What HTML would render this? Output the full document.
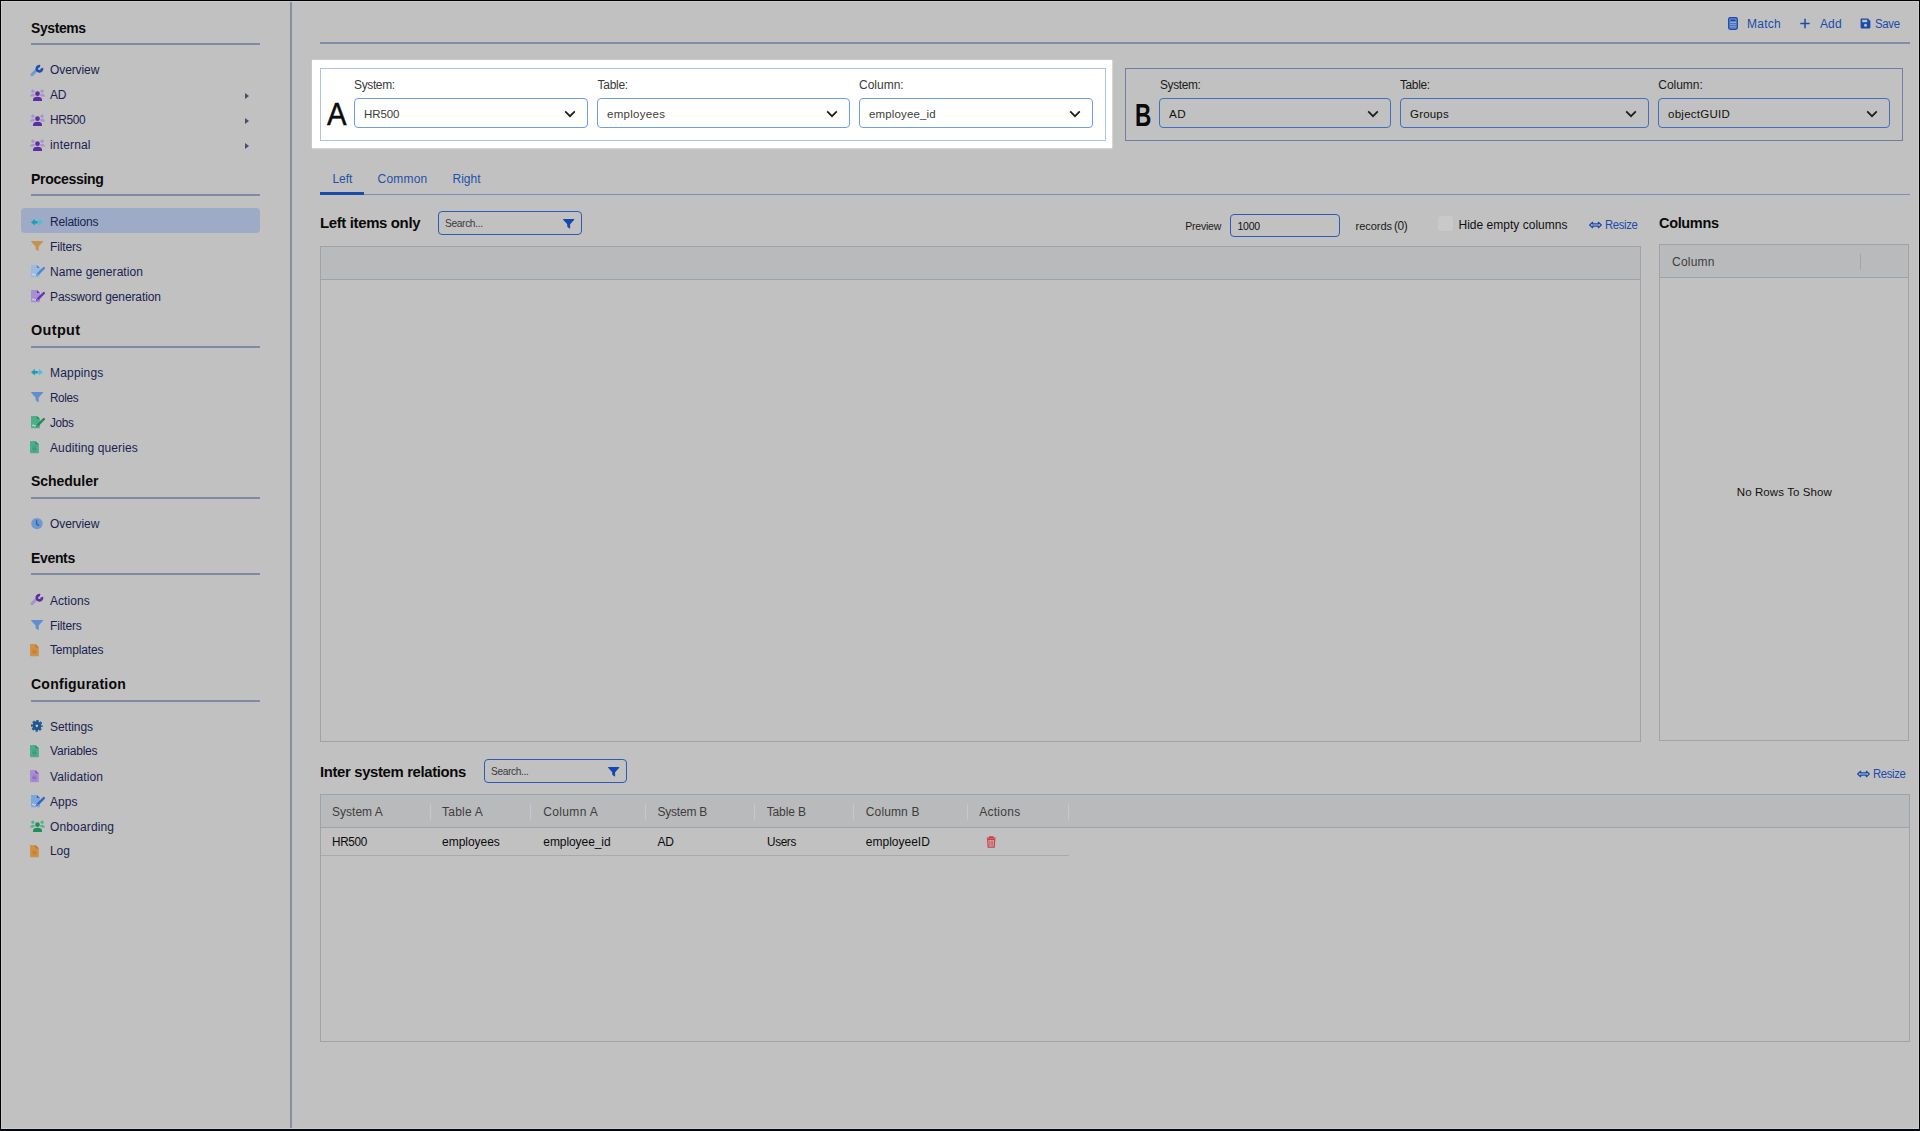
<!DOCTYPE html>
<html><head><meta charset="utf-8"><title>Relations</title>
<style>
*{box-sizing:border-box;margin:0;padding:0}
html,body{width:1920px;height:1131px;overflow:hidden;background:#c1c1c1;font-family:"Liberation Sans",sans-serif;color:#111}
.abs{position:absolute}
#frame{position:absolute;left:0;top:0;width:1920px;height:1131px;border:1px solid #000;border-bottom:2px solid #04070e;z-index:50;pointer-events:none}
#frame:after{content:"";position:absolute;left:0;top:0;right:0;bottom:0;border:1px solid #cccccc}
#side{position:absolute;left:0;top:0;width:292px;height:1131px;border-right:2px solid #888fa6}
.h{position:absolute;left:31px;font-weight:bold;font-size:14.5px;letter-spacing:-0.2px;color:#0a0a0a;white-space:nowrap;line-height:20px}
.hl{position:absolute;left:31px;width:229px;height:2px;background:#7f8aa5}
.it{position:absolute;left:50px;font-size:12px;color:#1a2150;white-space:nowrap;line-height:16px}
.ic{position:absolute;line-height:0}
.car{position:absolute;left:245px;width:0;height:0;border-left:4px solid #4a4e6a;border-top:3.5px solid transparent;border-bottom:3.5px solid transparent}
#sel{position:absolute;left:21px;top:208px;width:239px;height:25px;background:#9dabc6;border-radius:4px}
.ln{position:absolute;height:1px;background:#8e98ae}
.lbl{position:absolute;font-size:12px;color:#1a1a1a;white-space:nowrap;line-height:14px}
.la{color:#3a3a3a}
.dd{position:absolute;height:30px;border:1px solid #3f70c2;border-radius:4px;font-size:12px;color:#111;line-height:28px;padding-left:9px;white-space:nowrap}
.da{border-color:#6a9fee;color:#3c3c3c}
.dd svg{position:absolute;right:11px;top:11px}
.big{position:absolute;font-size:29.5px;color:#0a0a0a;line-height:34px}
.tab{position:absolute;top:171px;font-size:12px;color:#2550a8;line-height:16px;white-space:nowrap}
.ttl{position:absolute;font-weight:bold;font-size:14.5px;letter-spacing:-0.2px;color:#0a0a0a;line-height:18px;white-space:nowrap}
.srch{position:absolute;height:24px;border:1px solid #2a5db8;border-radius:4px;font-size:10.5px;color:#3a3a3a;line-height:22px;padding-left:6px}
.lnk{position:absolute;font-size:12px;color:#1e52b4;white-space:nowrap;line-height:14px}
.grid{position:absolute;border:1px solid #9fa2a7;background:#c1c1c1}
.gh{position:absolute;left:0;top:0;right:0;background:#b9babc;border-bottom:1px solid #9fa2a7}
.th{position:absolute;font-size:12px;color:#3d3d3d;white-space:nowrap;line-height:14px}
.td{position:absolute;font-size:12px;color:#0c0c0c;white-space:nowrap;line-height:14px}
.sep{position:absolute;width:1px}

.t{position:absolute;white-space:nowrap}

</style></head><body>
<div id="side">
<div id="sel"></div>
<div class="t" style="left:31px;top:17.75px;font-size:14px;line-height:20px;color:#0a0a0a;font-weight:bold;letter-spacing:-0.350px;transform:scaleX(0.9929);transform-origin:0 0;">Systems</div>
<div class="hl" style="top:43px"></div>
<div class="t" style="left:31px;top:168.75px;font-size:14px;line-height:20px;color:#0a0a0a;font-weight:bold;letter-spacing:-0.287px;">Processing</div>
<div class="hl" style="top:194px"></div>
<div class="t" style="left:31px;top:320.45px;font-size:14px;line-height:20px;color:#0a0a0a;font-weight:bold;letter-spacing:0.350px;transform:scaleX(1.0289);transform-origin:0 0;">Output</div>
<div class="hl" style="top:346px"></div>
<div class="t" style="left:31px;top:471.05px;font-size:14px;line-height:20px;color:#0a0a0a;font-weight:bold;letter-spacing:-0.038px;">Scheduler</div>
<div class="hl" style="top:497px"></div>
<div class="t" style="left:31px;top:548.05px;font-size:14px;line-height:20px;color:#0a0a0a;font-weight:bold;letter-spacing:-0.344px;">Events</div>
<div class="hl" style="top:573px"></div>
<div class="t" style="left:31px;top:673.65px;font-size:14px;line-height:20px;color:#0a0a0a;font-weight:bold;letter-spacing:0.253px;">Configuration</div>
<div class="hl" style="top:700px"></div>
<div class="ic" style="left:29.7px;top:64.7px"><svg viewBox="0 0 13.3 11.5" width="13.3" height="11.5" style="display:block;overflow:visible"><path d="M1.9 9.7L6.6 5" stroke="#6c9ad0" stroke-width="3" stroke-linecap="round" fill="none"/><path d="M11.91 3.13A2.6 2.6 0 1 1 10.07 1.29" stroke="#1f4fb2" stroke-width="2.7" fill="none"/></svg></div>
<div class="t" style="left:50px;top:59.84px;font-size:12px;line-height:20px;color:#1a2150;letter-spacing:-0.102px;">Overview</div>
<div class="ic" style="left:30.3px;top:89.0px"><svg viewBox="0 0 15 12" width="15" height="12" style="display:block;overflow:visible"><circle cx="2.9" cy="2.2" r="1.65" fill="#a794cc"/><circle cx="12.1" cy="2.2" r="1.65" fill="#a794cc"/><path d="M0 7.6a2.9 2.7 0 0 1 5.2-1.7L3.6 7.6z" fill="#a794cc"/><path d="M15 7.6a2.9 2.7 0 0 0-5.2-1.7L11.4 7.6z" fill="#a794cc"/><circle cx="7.5" cy="4.7" r="2.35" fill="#5b2ea3"/><path d="M3 12v-1a4.5 3.3 0 0 1 9 0v1z" fill="#5b2ea3"/></svg></div>
<div class="t" style="left:50px;top:84.84px;font-size:12px;line-height:20px;color:#1a2150;letter-spacing:-0.172px;">AD</div>
<div class="car" style="top:93px"></div>
<div class="ic" style="left:30.3px;top:113.8px"><svg viewBox="0 0 15 12" width="15" height="12" style="display:block;overflow:visible"><circle cx="2.9" cy="2.2" r="1.65" fill="#a794cc"/><circle cx="12.1" cy="2.2" r="1.65" fill="#a794cc"/><path d="M0 7.6a2.9 2.7 0 0 1 5.2-1.7L3.6 7.6z" fill="#a794cc"/><path d="M15 7.6a2.9 2.7 0 0 0-5.2-1.7L11.4 7.6z" fill="#a794cc"/><circle cx="7.5" cy="4.7" r="2.35" fill="#5b2ea3"/><path d="M3 12v-1a4.5 3.3 0 0 1 9 0v1z" fill="#5b2ea3"/></svg></div>
<div class="t" style="left:50px;top:109.84px;font-size:12px;line-height:20px;color:#1a2150;letter-spacing:-0.350px;transform:scaleX(0.9928);transform-origin:0 0;">HR500</div>
<div class="car" style="top:118px"></div>
<div class="ic" style="left:30.3px;top:138.7px"><svg viewBox="0 0 15 12" width="15" height="12" style="display:block;overflow:visible"><circle cx="2.9" cy="2.2" r="1.65" fill="#a794cc"/><circle cx="12.1" cy="2.2" r="1.65" fill="#a794cc"/><path d="M0 7.6a2.9 2.7 0 0 1 5.2-1.7L3.6 7.6z" fill="#a794cc"/><path d="M15 7.6a2.9 2.7 0 0 0-5.2-1.7L11.4 7.6z" fill="#a794cc"/><circle cx="7.5" cy="4.7" r="2.35" fill="#5b2ea3"/><path d="M3 12v-1a4.5 3.3 0 0 1 9 0v1z" fill="#5b2ea3"/></svg></div>
<div class="t" style="left:50px;top:134.84px;font-size:12px;line-height:20px;color:#1a2150;letter-spacing:0.163px;">internal</div>
<div class="car" style="top:143px"></div>
<div class="ic" style="left:30.7px;top:218.5px"><svg viewBox="0 0 11.9 6.4" width="11.9" height="6.4" style="display:block;overflow:visible"><path d="M11.9 3.2L8 0V2H5.6V4.4H8V6.4z" fill="#4fc0d4"/><path d="M0 3.2L3.9 0V2H6.6V4.4H3.9V6.4z" fill="#1b9db5"/></svg></div>
<div class="t" style="left:50px;top:211.84px;font-size:12px;line-height:20px;color:#1a2150;letter-spacing:-0.204px;">Relations</div>
<div class="ic" style="left:30.6px;top:241.3px"><svg viewBox="0 0 12.2 10.1" width="12.2" height="10.1" style="display:block;overflow:visible"><path d="M.5 0H11.7a.45.45 0 0 1 .33.76L7.7 5.4V9.6a.4.4 0 0 1-.64.33L4.95 8.4a.85.85 0 0 1-.35-.68V5.4L.17.76A.45.45 0 0 1 .5 0z" fill="#c9924b"/></svg></div>
<div class="t" style="left:50px;top:236.84px;font-size:12px;line-height:20px;color:#1a2150;letter-spacing:-0.145px;">Filters</div>
<div class="ic" style="left:30.8px;top:265.0px"><svg viewBox="0 0 13.5 12.2" width="13.5" height="12.2" style="display:block;overflow:visible"><path d="M.6 0H5.9L8.9 3V12.2H.6a.6.6 0 0 1-.6-.6V.6A.6.6 0 0 1 .6 0z" fill="#9db9dd"/><path d="M5.9 0L8.9 3H5.9z" fill="#4f86d4"/><path d="M1.4 10.2q.9-2.6 1.6-.6t1.5-.3" stroke="#e6e9f2" stroke-width=".95" fill="none"/><path d="M6.6 9.3L11.7 4.2" stroke="#4f86d4" stroke-width="2.5" fill="none"/><path d="M12.3 3.6L12.8 3.1" stroke="#4f86d4" stroke-width="2.5" fill="none" stroke-linecap="round"/><path d="M4.9 11l.55-2.1 1.55 1.55z" fill="#4f86d4"/></svg></div>
<div class="t" style="left:50px;top:261.84px;font-size:12px;line-height:20px;color:#1a2150;letter-spacing:0.060px;">Name generation</div>
<div class="ic" style="left:30.8px;top:289.8px"><svg viewBox="0 0 13.5 12.2" width="13.5" height="12.2" style="display:block;overflow:visible"><path d="M.6 0H5.9L8.9 3V12.2H.6a.6.6 0 0 1-.6-.6V.6A.6.6 0 0 1 .6 0z" fill="#a98fd0"/><path d="M5.9 0L8.9 3H5.9z" fill="#6a35b0"/><path d="M1.4 10.2q.9-2.6 1.6-.6t1.5-.3" stroke="#e6e9f2" stroke-width=".95" fill="none"/><path d="M6.6 9.3L11.7 4.2" stroke="#6a35b0" stroke-width="2.5" fill="none"/><path d="M12.3 3.6L12.8 3.1" stroke="#6a35b0" stroke-width="2.5" fill="none" stroke-linecap="round"/><path d="M4.9 11l.55-2.1 1.55 1.55z" fill="#6a35b0"/></svg></div>
<div class="t" style="left:50px;top:286.84px;font-size:12px;line-height:20px;color:#1a2150;letter-spacing:-0.096px;">Password generation</div>
<div class="ic" style="left:30.7px;top:368.9px"><svg viewBox="0 0 11.9 6.4" width="11.9" height="6.4" style="display:block;overflow:visible"><path d="M11.9 3.2L8 0V2H5.6V4.4H8V6.4z" fill="#4fc0d4"/><path d="M0 3.2L3.9 0V2H6.6V4.4H3.9V6.4z" fill="#1b9db5"/></svg></div>
<div class="t" style="left:50px;top:362.84px;font-size:12px;line-height:20px;color:#1a2150;letter-spacing:0.181px;">Mappings</div>
<div class="ic" style="left:30.6px;top:392.4px"><svg viewBox="0 0 12.2 10.1" width="12.2" height="10.1" style="display:block;overflow:visible"><path d="M.5 0H11.7a.45.45 0 0 1 .33.76L7.7 5.4V9.6a.4.4 0 0 1-.64.33L4.95 8.4a.85.85 0 0 1-.35-.68V5.4L.17.76A.45.45 0 0 1 .5 0z" fill="#5f8fd0"/></svg></div>
<div class="t" style="left:50px;top:387.84px;font-size:12px;line-height:20px;color:#1a2150;letter-spacing:-0.350px;transform:scaleX(0.9765);transform-origin:0 0;">Roles</div>
<div class="ic" style="left:30.8px;top:416.2px"><svg viewBox="0 0 13.5 12.2" width="13.5" height="12.2" style="display:block;overflow:visible"><path d="M.6 0H5.9L8.9 3V12.2H.6a.6.6 0 0 1-.6-.6V.6A.6.6 0 0 1 .6 0z" fill="#4fae8a"/><path d="M5.9 0L8.9 3H5.9z" fill="#23895f"/><path d="M1.4 10.2q.9-2.6 1.6-.6t1.5-.3" stroke="#e6e9f2" stroke-width=".95" fill="none"/><path d="M6.6 9.3L11.7 4.2" stroke="#23895f" stroke-width="2.5" fill="none"/><path d="M12.3 3.6L12.8 3.1" stroke="#23895f" stroke-width="2.5" fill="none" stroke-linecap="round"/><path d="M4.9 11l.55-2.1 1.55 1.55z" fill="#23895f"/></svg></div>
<div class="t" style="left:50px;top:412.84px;font-size:12px;line-height:20px;color:#1a2150;letter-spacing:-0.350px;transform:scaleX(0.9790);transform-origin:0 0;">Jobs</div>
<div class="ic" style="left:30.4px;top:441.1px"><svg viewBox="0 0 8.9 12.2" width="8.9" height="12.2" style="display:block;overflow:visible"><path d="M.9 0H5.4L8.9 3.5V11.3a.9.9 0 0 1-.9.9H.9a.9.9 0 0 1-.9-.9V.9A.9.9 0 0 1 .9 0z" fill="#4fae8a"/><path d="M5.4 0L8.9 3.5H6a.6.6 0 0 1-.6-.6z" fill="#2b8f6a"/><rect x="2.3" y="6.4" width="4.3" height="2.7" fill="#2b8f6a" opacity=".6"/><path d="M2.3 5.3H6.6M2.3 10.3H6.6" stroke="#2b8f6a" stroke-width=".8" opacity=".35"/></svg></div>
<div class="t" style="left:50px;top:437.84px;font-size:12px;line-height:20px;color:#1a2150;letter-spacing:0.116px;">Auditing queries</div>
<div class="ic" style="left:30.6px;top:517.8px"><svg viewBox="0 0 11.9 11.2" width="11.9" height="11.2" style="display:block;overflow:visible"><circle cx="5.95" cy="5.6" r="5.7" fill="#6c9ad0"/><path d="M5.6 2.6V6L7.7 7.4" stroke="#2a5bb5" stroke-width="1.3" fill="none" stroke-linecap="round"/></svg></div>
<div class="t" style="left:50px;top:513.84px;font-size:12px;line-height:20px;color:#1a2150;letter-spacing:-0.102px;">Overview</div>
<div class="ic" style="left:29.7px;top:593.6px"><svg viewBox="0 0 13.3 11.5" width="13.3" height="11.5" style="display:block;overflow:visible"><path d="M1.9 9.7L6.6 5" stroke="#a794cc" stroke-width="3" stroke-linecap="round" fill="none"/><path d="M11.91 3.13A2.6 2.6 0 1 1 10.07 1.29" stroke="#5b2ea3" stroke-width="2.7" fill="none"/></svg></div>
<div class="t" style="left:50px;top:590.84px;font-size:12px;line-height:20px;color:#1a2150;letter-spacing:0.057px;">Actions</div>
<div class="ic" style="left:30.6px;top:620.2px"><svg viewBox="0 0 12.2 10.1" width="12.2" height="10.1" style="display:block;overflow:visible"><path d="M.5 0H11.7a.45.45 0 0 1 .33.76L7.7 5.4V9.6a.4.4 0 0 1-.64.33L4.95 8.4a.85.85 0 0 1-.35-.68V5.4L.17.76A.45.45 0 0 1 .5 0z" fill="#5f8fd0"/></svg></div>
<div class="t" style="left:50px;top:615.84px;font-size:12px;line-height:20px;color:#1a2150;letter-spacing:-0.145px;">Filters</div>
<div class="ic" style="left:30.4px;top:644.2px"><svg viewBox="0 0 8.9 12.2" width="8.9" height="12.2" style="display:block;overflow:visible"><path d="M.9 0H5.4L8.9 3.5V11.3a.9.9 0 0 1-.9.9H.9a.9.9 0 0 1-.9-.9V.9A.9.9 0 0 1 .9 0z" fill="#cf9248"/><path d="M5.4 0L8.9 3.5H6a.6.6 0 0 1-.6-.6z" fill="#b9772a"/><rect x="2.3" y="6.4" width="4.3" height="2.7" fill="#b9772a" opacity=".6"/><path d="M2.3 5.3H6.6M2.3 10.3H6.6" stroke="#b9772a" stroke-width=".8" opacity=".35"/></svg></div>
<div class="t" style="left:50px;top:639.84px;font-size:12px;line-height:20px;color:#1a2150;letter-spacing:-0.150px;">Templates</div>
<div class="ic" style="left:30.5px;top:720.2px"><svg viewBox="0 0 11.7 11.7" width="11.7" height="11.7" style="display:block;overflow:visible"><circle cx="5.85" cy="5.85" r="2.9" stroke="#1d5590" stroke-width="3.2" fill="none"/><circle cx="5.85" cy="5.85" r="5.05" stroke="#1d5590" stroke-width="1.7" fill="none" stroke-dasharray="2.25 1.716" stroke-dashoffset="1.125"/></svg></div>
<div class="t" style="left:50px;top:716.84px;font-size:12px;line-height:20px;color:#1a2150;letter-spacing:-0.037px;">Settings</div>
<div class="ic" style="left:30.4px;top:744.9px"><svg viewBox="0 0 8.9 12.2" width="8.9" height="12.2" style="display:block;overflow:visible"><path d="M.9 0H5.4L8.9 3.5V11.3a.9.9 0 0 1-.9.9H.9a.9.9 0 0 1-.9-.9V.9A.9.9 0 0 1 .9 0z" fill="#4fae8a"/><path d="M5.4 0L8.9 3.5H6a.6.6 0 0 1-.6-.6z" fill="#2b8f6a"/><rect x="2.3" y="6.4" width="4.3" height="2.7" fill="#2b8f6a" opacity=".6"/><path d="M2.3 5.3H6.6M2.3 10.3H6.6" stroke="#2b8f6a" stroke-width=".8" opacity=".35"/></svg></div>
<div class="t" style="left:50px;top:740.84px;font-size:12px;line-height:20px;color:#1a2150;letter-spacing:-0.193px;">Variables</div>
<div class="ic" style="left:30.4px;top:770.3px"><svg viewBox="0 0 8.9 12.2" width="8.9" height="12.2" style="display:block;overflow:visible"><path d="M.9 0H5.4L8.9 3.5V11.3a.9.9 0 0 1-.9.9H.9a.9.9 0 0 1-.9-.9V.9A.9.9 0 0 1 .9 0z" fill="#a98fd0"/><path d="M5.4 0L8.9 3.5H6a.6.6 0 0 1-.6-.6z" fill="#7d55b8"/><rect x="2.3" y="6.4" width="4.3" height="2.7" fill="#7d55b8" opacity=".6"/><path d="M2.3 5.3H6.6M2.3 10.3H6.6" stroke="#7d55b8" stroke-width=".8" opacity=".35"/></svg></div>
<div class="t" style="left:50px;top:766.84px;font-size:12px;line-height:20px;color:#1a2150;letter-spacing:0.130px;">Validation</div>
<div class="ic" style="left:30.8px;top:795.4px"><svg viewBox="0 0 13.5 12.2" width="13.5" height="12.2" style="display:block;overflow:visible"><path d="M.6 0H5.9L8.9 3V12.2H.6a.6.6 0 0 1-.6-.6V.6A.6.6 0 0 1 .6 0z" fill="#7fa6dc"/><path d="M5.9 0L8.9 3H5.9z" fill="#2f67c4"/><path d="M1.4 10.2q.9-2.6 1.6-.6t1.5-.3" stroke="#e6e9f2" stroke-width=".95" fill="none"/><path d="M6.6 9.3L11.7 4.2" stroke="#2f67c4" stroke-width="2.5" fill="none"/><path d="M12.3 3.6L12.8 3.1" stroke="#2f67c4" stroke-width="2.5" fill="none" stroke-linecap="round"/><path d="M4.9 11l.55-2.1 1.55 1.55z" fill="#2f67c4"/></svg></div>
<div class="t" style="left:50px;top:791.84px;font-size:12px;line-height:20px;color:#1a2150;letter-spacing:0.047px;">Apps</div>
<div class="ic" style="left:30.3px;top:820.1px"><svg viewBox="0 0 15 12" width="15" height="12" style="display:block;overflow:visible"><circle cx="2.9" cy="2.2" r="1.65" fill="#56b388"/><circle cx="12.1" cy="2.2" r="1.65" fill="#56b388"/><path d="M0 7.6a2.9 2.7 0 0 1 5.2-1.7L3.6 7.6z" fill="#56b388"/><path d="M15 7.6a2.9 2.7 0 0 0-5.2-1.7L11.4 7.6z" fill="#56b388"/><circle cx="7.5" cy="4.7" r="2.35" fill="#1e8f5c"/><path d="M3 12v-1a4.5 3.3 0 0 1 9 0v1z" fill="#1e8f5c"/></svg></div>
<div class="t" style="left:50px;top:816.84px;font-size:12px;line-height:20px;color:#1a2150;letter-spacing:0.142px;">Onboarding</div>
<div class="ic" style="left:30.4px;top:844.8px"><svg viewBox="0 0 8.9 12.2" width="8.9" height="12.2" style="display:block;overflow:visible"><path d="M.9 0H5.4L8.9 3.5V11.3a.9.9 0 0 1-.9.9H.9a.9.9 0 0 1-.9-.9V.9A.9.9 0 0 1 .9 0z" fill="#cf9248"/><path d="M5.4 0L8.9 3.5H6a.6.6 0 0 1-.6-.6z" fill="#b9772a"/><rect x="2.3" y="6.4" width="4.3" height="2.7" fill="#b9772a" opacity=".6"/><path d="M2.3 5.3H6.6M2.3 10.3H6.6" stroke="#b9772a" stroke-width=".8" opacity=".35"/></svg></div>
<div class="t" style="left:50px;top:840.84px;font-size:12px;line-height:20px;color:#1a2150;letter-spacing:-0.066px;">Log</div>
</div>
<div id="main">
<div class="abs" style="left:1728px;top:17px;line-height:0"><svg viewBox="0 0 10 13" width="10" height="13"><rect x="0.8" y="0.8" width="8.4" height="11.4" rx="1.4" fill="#8fa7d6" stroke="#1a4bab" stroke-width="1.5"/><rect x="2.3" y="2.4" width="5.4" height="2" fill="#1a4bab"/><path d="M2.4 6.6h5.2M2.4 8.4h5.2M2.4 10.2h5.2" stroke="#1a4bab" stroke-width="1" stroke-dasharray="1.2 0.8"/></svg></div>
<div class="t" style="left:1747px;top:13.64px;font-size:12px;line-height:20px;color:#1a4bab;letter-spacing:0.228px;">Match</div>
<div class="abs" style="left:1800px;top:18px;line-height:0"><svg viewBox="0 0 10 11" width="10" height="11"><path d="M5 0.8V10.2M0.3 5.5H9.7" stroke="#1a4bab" stroke-width="1.5"/></svg></div>
<div class="t" style="left:1820px;top:13.64px;font-size:12px;line-height:20px;color:#1a4bab;letter-spacing:0.120px;">Add</div>
<div class="abs" style="left:1860px;top:18px;line-height:0"><svg viewBox="0 0 11 11" width="11" height="11"><path d="M1.4 0.6H8L10.4 3V9.6a.8.8 0 0 1-.8.8H1.4a.8.8 0 0 1-.8-.8V1.4a.8.8 0 0 1 .8-.8z" fill="#1a4bab"/><rect x="2.2" y="1.8" width="5" height="2.4" fill="#c1c1c1"/><circle cx="5.5" cy="7.2" r="1.5" fill="#c1c1c1"/></svg></div>
<div class="t" style="left:1875px;top:13.64px;font-size:12px;line-height:20px;color:#1a4bab;letter-spacing:-0.350px;transform:scaleX(0.9502);transform-origin:0 0;">Save</div>
<div class="ln" style="left:320px;top:42px;width:1590px;height:2px;background:#828ca9"></div>
<div class="abs" style="left:312px;top:60px;width:800px;height:88px;background:#fff;box-shadow:0 0 1.5px 0.5px #fff"></div>
<div class="abs" style="left:320px;top:68px;width:786px;height:73px;border:1px solid #b4c0e0"></div>
<div class="big" style="left:327px;top:97px;font-size:31.5px;-webkit-text-stroke:0.45px #0a0a0a;transform:scaleX(.93);transform-origin:0 0">A</div>
<div class="t" style="left:354px;top:74.54px;font-size:12px;line-height:20px;color:#3a3a3a;letter-spacing:-0.350px;transform:scaleX(0.9965);transform-origin:0 0;">System:</div>
<div class="t" style="left:597.5px;top:74.54px;font-size:12px;line-height:20px;color:#3a3a3a;letter-spacing:-0.266px;">Table:</div>
<div class="t" style="left:859px;top:74.54px;font-size:12px;line-height:20px;color:#3a3a3a;letter-spacing:0.002px;">Column:</div>
<div class="dd" style="left:354px;top:98px;width:234px;border-color:#6a9fee"><svg viewBox="0 0 12 8" width="12" height="8"><path d="M1.2 1.4L6 6.2L10.8 1.4" stroke="#1b1b1b" stroke-width="1.7" fill="none"/></svg></div><div class="t" style="left:364px;top:103.52px;font-size:11.5px;line-height:20px;color:#3c3c3c;letter-spacing:-0.103px;">HR500</div>
<div class="dd" style="left:597px;top:98px;width:253px;border-color:#6a9fee"><svg viewBox="0 0 12 8" width="12" height="8"><path d="M1.2 1.4L6 6.2L10.8 1.4" stroke="#1b1b1b" stroke-width="1.7" fill="none"/></svg></div><div class="t" style="left:607px;top:103.52px;font-size:11.5px;line-height:20px;color:#3c3c3c;letter-spacing:0.284px;">employees</div>
<div class="dd" style="left:859px;top:98px;width:234px;border-color:#6a9fee"><svg viewBox="0 0 12 8" width="12" height="8"><path d="M1.2 1.4L6 6.2L10.8 1.4" stroke="#1b1b1b" stroke-width="1.7" fill="none"/></svg></div><div class="t" style="left:869px;top:103.52px;font-size:11.5px;line-height:20px;color:#3c3c3c;letter-spacing:0.138px;">employee_id</div>
<div class="abs" style="left:1125px;top:68px;width:778px;height:73px;border:1px solid #717da3"></div>
<div class="big" style="left:1135px;top:97.5px;font-weight:bold;font-size:30.5px;transform:scaleX(.74);transform-origin:0 0">B</div>
<div class="t" style="left:1159.5px;top:74.54px;font-size:12px;line-height:20px;color:#1a1a1a;letter-spacing:-0.350px;transform:scaleX(0.9892);transform-origin:0 0;">System:</div>
<div class="t" style="left:1400.3px;top:74.54px;font-size:12px;line-height:20px;color:#1a1a1a;letter-spacing:-0.350px;transform:scaleX(0.9907);transform-origin:0 0;">Table:</div>
<div class="t" style="left:1658.3px;top:74.54px;font-size:12px;line-height:20px;color:#1a1a1a;letter-spacing:-0.031px;">Column:</div>
<div class="dd" style="left:1159px;top:98px;width:232px;border-color:#3f70c2"><svg viewBox="0 0 12 8" width="12" height="8"><path d="M1.2 1.4L6 6.2L10.8 1.4" stroke="#1b1b1b" stroke-width="1.7" fill="none"/></svg></div><div class="t" style="left:1169px;top:103.52px;font-size:11.5px;line-height:20px;color:#111;letter-spacing:0.350px;transform:scaleX(1.0163);transform-origin:0 0;">AD</div>
<div class="dd" style="left:1400px;top:98px;width:249px;border-color:#3f70c2"><svg viewBox="0 0 12 8" width="12" height="8"><path d="M1.2 1.4L6 6.2L10.8 1.4" stroke="#1b1b1b" stroke-width="1.7" fill="none"/></svg></div><div class="t" style="left:1410px;top:103.52px;font-size:11.5px;line-height:20px;color:#111;letter-spacing:0.196px;">Groups</div>
<div class="dd" style="left:1658px;top:98px;width:232px;border-color:#3f70c2"><svg viewBox="0 0 12 8" width="12" height="8"><path d="M1.2 1.4L6 6.2L10.8 1.4" stroke="#1b1b1b" stroke-width="1.7" fill="none"/></svg></div><div class="t" style="left:1668px;top:103.52px;font-size:11.5px;line-height:20px;color:#111;letter-spacing:0.263px;">objectGUID</div>
<div class="t" style="left:332.5px;top:169.14px;font-size:12px;line-height:20px;color:#2550a8;letter-spacing:-0.072px;">Left</div>
<div class="t" style="left:377.5px;top:169.14px;font-size:12px;line-height:20px;color:#2550a8;letter-spacing:0.222px;">Common</div>
<div class="t" style="left:452.5px;top:169.14px;font-size:12px;line-height:20px;color:#2550a8;letter-spacing:0.021px;">Right</div>
<div class="ln" style="left:320px;top:194px;width:1590px;background:#7f8fb8"></div>
<div class="abs" style="left:320px;top:192px;width:44px;height:3px;background:#1a4bab"></div>
<div class="t" style="left:320px;top:213.10px;font-size:15px;line-height:20px;color:#0a0a0a;font-weight:bold;letter-spacing:-0.350px;transform:scaleX(0.9954);transform-origin:0 0;">Left items only</div>
<div class="srch" style="left:438px;top:211px;width:144px"><span class="abs" style="right:6.5px;top:7px;line-height:0"><svg viewBox="0 0 12 10" width="11.4" height="9.5" style="display:block"><path d="M.5 0H11.5a.45.45 0 0 1 .33.76L7.5 5.4V9.6a.4.4 0 0 1-.64.33L4.8 8.4a.85.85 0 0 1-.35-.68V5.4L.17.76A.45.45 0 0 1 .5 0z" fill="#1447b0"/></svg></span></div><div class="t" style="left:445px;top:213.06px;font-size:10.5px;line-height:20px;color:#3a3a3a;letter-spacing:-0.350px;transform:scaleX(0.9686);transform-origin:0 0;">Search...</div>
<div class="t" style="left:1185.3px;top:216.36px;font-size:10.5px;line-height:20px;color:#1a1a1a;letter-spacing:-0.227px;">Preview</div>
<div class="abs" style="left:1230px;top:214px;width:110px;height:23px;border:1px solid #2a5db8;border-radius:4px"></div>
<div class="t" style="left:1237.5px;top:216.36px;font-size:10.5px;line-height:20px;color:#111;letter-spacing:-0.253px;">1000</div>
<div class="t" style="left:1355.5px;top:216.19px;font-size:11px;line-height:20px;color:#1a1a1a;letter-spacing:-0.031px;">records</div>
<div class="t" style="left:1394px;top:215.67px;font-size:12.5px;line-height:20px;color:#1a1a1a;letter-spacing:-0.350px;transform:scaleX(0.9464);transform-origin:0 0;">(0)</div>
<div class="abs" style="left:1438px;top:216px;width:15px;height:15px;background:#c9c9c9;border-radius:2px;box-shadow:0 0 1px #b4b4b4"></div>
<div class="t" style="left:1458.5px;top:215.04px;font-size:12px;line-height:20px;color:#111;letter-spacing:0.017px;">Hide empty columns</div>
<div class="abs" style="left:1589px;top:221.1px;line-height:0"><svg viewBox="0 0 13 8" width="13" height="8"><path d="M0.7 4L3.6 1.3V2.9H9.4V1.3L12.3 4L9.4 6.7V5.1H3.6V6.7z" fill="none" stroke="#1a4bab" stroke-width="1.25" stroke-linejoin="round"/></svg></div><div class="t" style="left:1605px;top:215.44px;font-size:12px;line-height:20px;color:#1a4bab;letter-spacing:-0.350px;transform:scaleX(0.9417);transform-origin:0 0;">Resize</div>
<div class="t" style="left:1659.4px;top:212.90px;font-size:15px;line-height:20px;color:#0a0a0a;font-weight:bold;letter-spacing:-0.350px;transform:scaleX(0.9666);transform-origin:0 0;">Columns</div>
<div class="grid" style="left:320px;top:246px;width:1321px;height:496px"><div class="gh" style="height:33px"></div></div>
<div class="grid" style="left:1659px;top:244px;width:250px;height:497px"><div class="gh" style="height:33px"></div><div class="sep" style="left:200px;top:9px;height:16px;background:#a2a4a8"></div></div>
<div class="t" style="left:1672px;top:251.84px;font-size:12px;line-height:20px;color:#3d3d3d;letter-spacing:0.228px;">Column</div>
<div class="t" style="left:1736.8px;top:482.02px;font-size:11.5px;line-height:20px;color:#111;letter-spacing:0.089px;">No Rows To Show</div>
<div class="t" style="left:320px;top:761.70px;font-size:15px;line-height:20px;color:#0a0a0a;font-weight:bold;letter-spacing:-0.350px;transform:scaleX(0.9904);transform-origin:0 0;">Inter system relations</div>
<div class="srch" style="left:484px;top:759px;width:143px"><span class="abs" style="right:6.5px;top:7px;line-height:0"><svg viewBox="0 0 12 10" width="11.4" height="9.5" style="display:block"><path d="M.5 0H11.5a.45.45 0 0 1 .33.76L7.5 5.4V9.6a.4.4 0 0 1-.64.33L4.8 8.4a.85.85 0 0 1-.35-.68V5.4L.17.76A.45.45 0 0 1 .5 0z" fill="#1447b0"/></svg></span></div><div class="t" style="left:490.5px;top:761.16px;font-size:10.5px;line-height:20px;color:#3a3a3a;letter-spacing:-0.350px;transform:scaleX(0.9610);transform-origin:0 0;">Search...</div>
<div class="abs" style="left:1857px;top:769.7px;line-height:0"><svg viewBox="0 0 13 8" width="13" height="8"><path d="M0.7 4L3.6 1.3V2.9H9.4V1.3L12.3 4L9.4 6.7V5.1H3.6V6.7z" fill="none" stroke="#1a4bab" stroke-width="1.25" stroke-linejoin="round"/></svg></div><div class="t" style="left:1873px;top:764.04px;font-size:12px;line-height:20px;color:#1a4bab;letter-spacing:-0.350px;transform:scaleX(0.9417);transform-origin:0 0;">Resize</div>
<div class="grid" style="left:320px;top:794px;width:1590px;height:248px"><div class="gh" style="height:33px"></div>
<div class="sep" style="left:109px;top:9px;height:16px;background:#c6c8cb"></div>
<div class="sep" style="left:209px;top:9px;height:16px;background:#c6c8cb"></div>
<div class="sep" style="left:324px;top:9px;height:16px;background:#c6c8cb"></div>
<div class="sep" style="left:433px;top:9px;height:16px;background:#c6c8cb"></div>
<div class="sep" style="left:532px;top:9px;height:16px;background:#c6c8cb"></div>
<div class="sep" style="left:646px;top:9px;height:16px;background:#c6c8cb"></div>
<div class="sep" style="left:747px;top:9px;height:16px;background:#c6c8cb"></div>
<div class="abs" style="left:0;top:60px;width:748px;height:1px;background:#a8aaae"></div>
<div class="abs" style="left:664.5px;top:41px;line-height:0"><svg viewBox="0 0 12 14" width="10.4" height="12" style="display:block"><path d="M0.8 2.6H11.2M4 2.4V1h4v1.4" stroke="#d23c45" stroke-width="1.5" fill="none"/><path d="M1.9 4.2h8.2l-.6 8.8H2.5z" fill="none" stroke="#d23c45" stroke-width="1.4"/><path d="M4.3 5.8v5.6M6 5.8v5.6M7.7 5.8v5.6" stroke="#d23c45" stroke-width="0.9"/></svg></div>
</div>
<div class="t" style="left:332.1px;top:801.94px;font-size:12px;line-height:20px;color:#3d3d3d;letter-spacing:-0.012px;">System A</div>
<div class="t" style="left:442.1px;top:801.94px;font-size:12px;line-height:20px;color:#3d3d3d;letter-spacing:0.204px;">Table A</div>
<div class="t" style="left:543.3px;top:801.94px;font-size:12px;line-height:20px;color:#3d3d3d;letter-spacing:0.338px;">Column A</div>
<div class="t" style="left:657.5px;top:801.94px;font-size:12px;line-height:20px;color:#3d3d3d;letter-spacing:-0.223px;">System B</div>
<div class="t" style="left:766.7px;top:801.94px;font-size:12px;line-height:20px;color:#3d3d3d;letter-spacing:-0.122px;">Table B</div>
<div class="t" style="left:865.8px;top:801.94px;font-size:12px;line-height:20px;color:#3d3d3d;letter-spacing:0.130px;">Column B</div>
<div class="t" style="left:979.2px;top:801.94px;font-size:12px;line-height:20px;color:#3d3d3d;letter-spacing:0.273px;">Actions</div>
<div class="t" style="left:332.1px;top:832.24px;font-size:12px;line-height:20px;color:#0c0c0c;letter-spacing:-0.350px;transform:scaleX(0.9789);transform-origin:0 0;">HR500</div>
<div class="t" style="left:442.1px;top:832.24px;font-size:12px;line-height:20px;color:#0c0c0c;letter-spacing:-0.041px;">employees</div>
<div class="t" style="left:543.3px;top:832.24px;font-size:12px;line-height:20px;color:#0c0c0c;letter-spacing:-0.075px;">employee_id</div>
<div class="t" style="left:657.5px;top:832.24px;font-size:12px;line-height:20px;color:#0c0c0c;letter-spacing:-0.272px;">AD</div>
<div class="t" style="left:766.7px;top:832.24px;font-size:12px;line-height:20px;color:#0c0c0c;letter-spacing:-0.350px;transform:scaleX(0.9785);transform-origin:0 0;">Users</div>
<div class="t" style="left:865.8px;top:832.24px;font-size:12px;line-height:20px;color:#0c0c0c;letter-spacing:-0.003px;">employeeID</div>
</div>
<div id="frame"></div>
</body></html>
